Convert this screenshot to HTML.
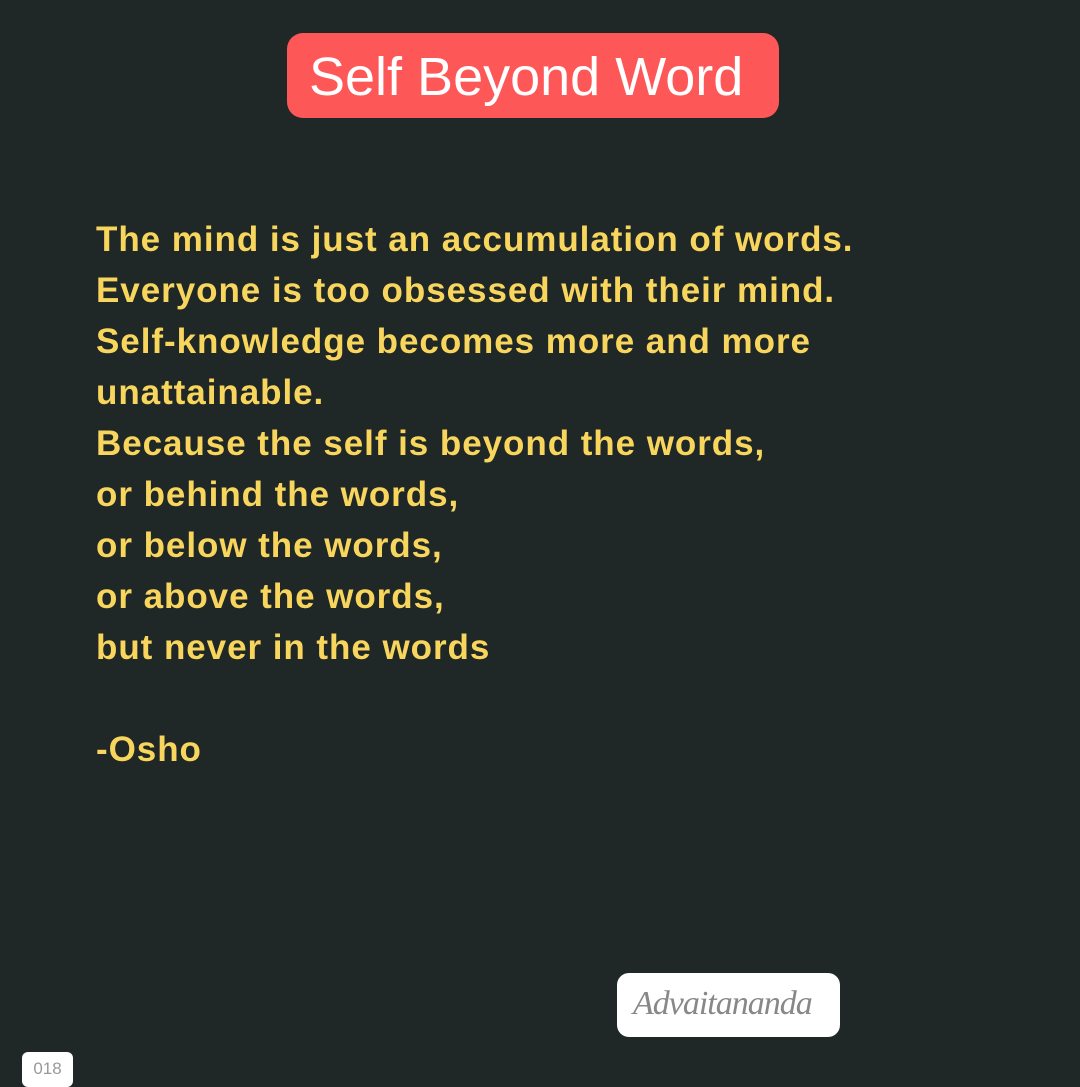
<!DOCTYPE html>
<html><head><meta charset="utf-8"><style>
html,body{margin:0;padding:0}
body{width:1080px;height:1080px;background:#1f2826;position:relative;overflow:hidden;font-family:"Liberation Sans",sans-serif}
.title{position:absolute;left:287px;top:33px;width:492px;height:85px;background:#fe5758;border-radius:16px}
.title span{position:absolute;left:22px;top:13px;font-size:54px;color:#fff;white-space:nowrap}
.txt{position:absolute;left:96px;top:214px;color:#f8d55c;font-size:35px;font-weight:bold;line-height:51px;white-space:pre;letter-spacing:0.95px}
.sig{position:absolute;left:617px;top:973px;width:223px;height:64px;background:#fff;border-radius:12px}
.sig span{position:absolute;left:16px;top:12px;font-family:"Liberation Serif",serif;font-style:italic;font-size:34px;color:#888;letter-spacing:-1px}
.num{position:absolute;left:22px;top:1052px;width:51px;height:35px;background:#fff;border-radius:6px;font-family:"Liberation Sans",sans-serif;font-size:17px;color:#999;text-align:center;line-height:34px}
</style></head><body>
<div class="title"><span>Self Beyond Word</span></div>
<div class="txt">The mind is just an accumulation of words.
Everyone is too obsessed with their mind.
Self-knowledge becomes more and more
unattainable.
Because the self is beyond the words,
or behind the words,
or below the words,
or above the words,
but never in the words

-Osho</div>
<div class="sig"><span>Advaitananda</span></div>
<div class="num">018</div>
</body></html>
